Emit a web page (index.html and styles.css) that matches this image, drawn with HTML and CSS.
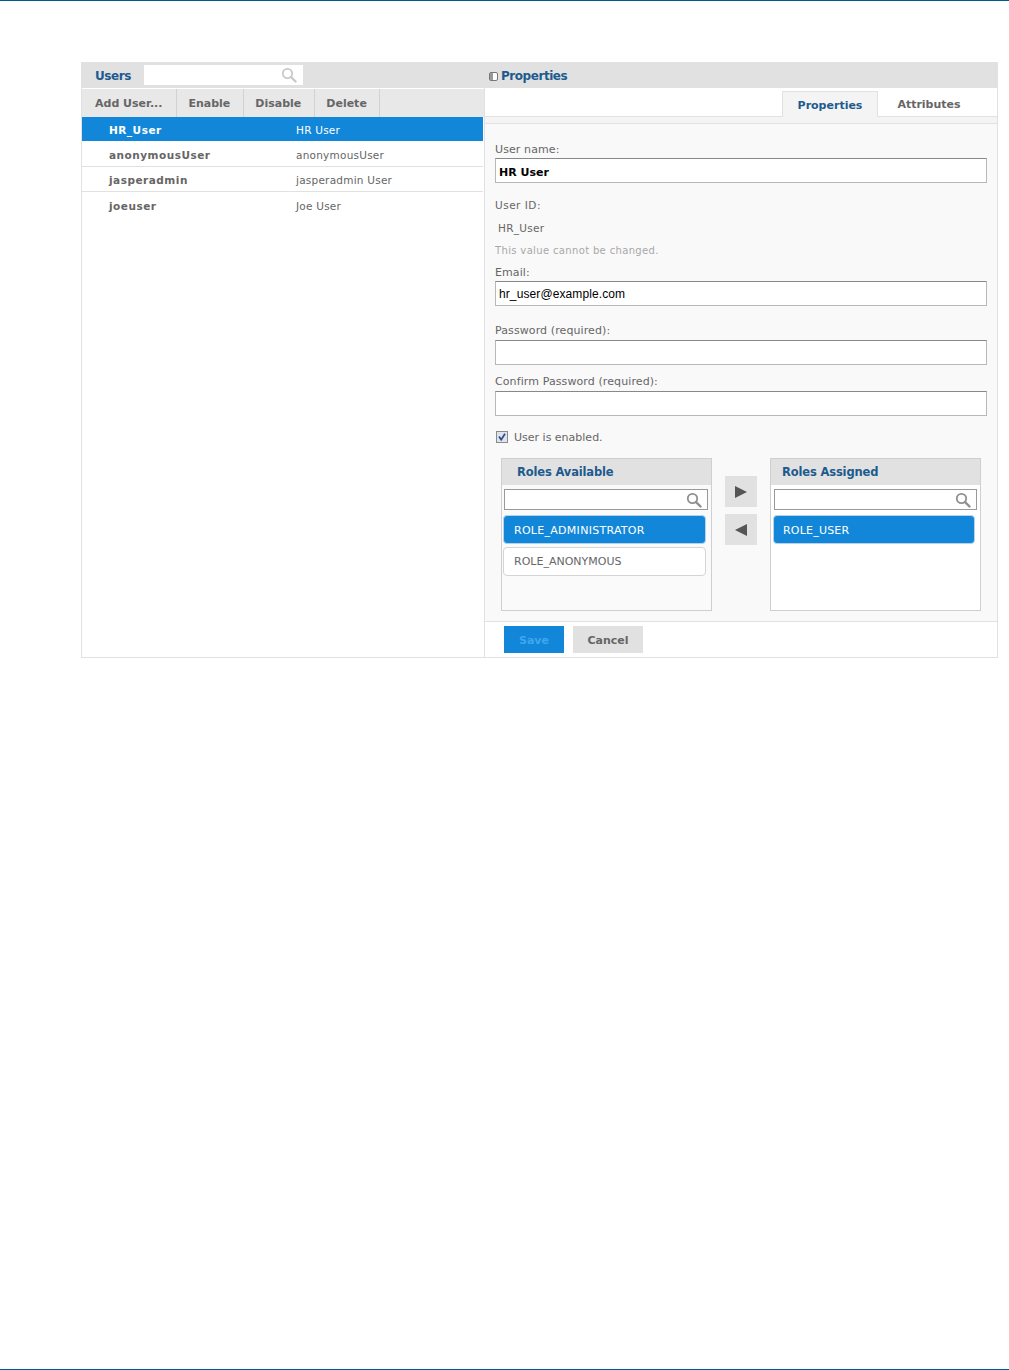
FILE: index.html
```html
<!DOCTYPE html>
<html lang="en">
<head>
<meta charset="utf-8">
<title>Users</title>
<link rel="stylesheet" href="styles.css">
</head>
<body>
<svg class="defs" width="0" height="0" aria-hidden="true"><symbol id="mag" viewBox="0 0 16 16"><circle cx="6.5" cy="6.5" r="4.7" fill="none" stroke="currentColor" stroke-width="1.8"/><path d="M10 10l4.5 4.5" stroke="currentColor" stroke-width="2.4" stroke-linecap="round"/></symbol></svg>
<div class="page">
  <main class="manager">
    <section class="users">
      <header class="head users-head">
        <h2 class="title">Users</h2>
        <div class="head-search"><svg class="mag mag-light"><use href="#mag"/></svg></div>
      </header>
      <nav class="toolbar">
        <span class="tool">Add User...</span>
        <span class="tool">Enable</span>
        <span class="tool">Disable</span>
        <span class="tool">Delete</span>
      </nav>
      <ul class="user-list">
        <li class="user selected"><b>HR_User</b><span>HR User</span></li>
        <li class="user"><b>anonymousUser</b><span>anonymousUser</span></li>
        <li class="user"><b>jasperadmin</b><span>jasperadmin User</span></li>
        <li class="user plain"><b>joeuser</b><span>Joe User</span></li>
      </ul>
    </section>
    <section class="props">
      <header class="head props-head">
        <svg class="panel-icon" viewBox="0 0 9 9"><rect x=".5" y=".5" width="8" height="8" rx="1.5" fill="#fff" stroke="#777"/><rect x="1" y="1" width="3" height="7" fill="#999"/></svg>
        <h2 class="title">Properties</h2>
      </header>
      <div class="tabs">
        <span class="tab active">Properties</span>
        <span class="tab">Attributes</span>
      </div>
      <div class="strip"></div>
      <form class="form">
        <label class="lab lab-name">User name:</label>
        <div class="field strong">HR User</div>
        <label class="lab lab-id">User ID:</label>
        <div class="idval">HR_User</div>
        <div class="hint">This value cannot be changed.</div>
        <label class="lab lab-email">Email:</label>
        <div class="field mail">hr_user@example.com</div>
        <label class="lab lab-pw">Password (required):</label>
        <div class="field"></div>
        <label class="lab lab-cpw">Confirm Password (required):</label>
        <div class="field"></div>
        <div class="enabled">
          <svg class="check" viewBox="0 0 12 12"><rect x=".5" y=".5" width="11" height="11" fill="#dfe3ea" stroke="#8a8a8a"/><path d="M3 5.5l2.2 3.2L9 2.8" fill="none" stroke="#2c4a8c" stroke-width="1.7"/></svg>
          <span>User is enabled.</span>
        </div>
        <div class="roles">
          <div class="role-box avail">
            <h3 class="role-title">Roles Available</h3>
            <div class="role-search"><svg class="mag"><use href="#mag"/></svg></div>
            <div class="role-item on wide">ROLE_ADMINISTRATOR</div>
            <div class="role-item">ROLE_ANONYMOUS</div>
          </div>
          <div class="moves">
            <span class="move"><svg viewBox="0 0 12 12" width="12" height="12"><path d="M0 0l12 6-12 6z" fill="#555"/></svg></span>
            <span class="move"><svg viewBox="0 0 12 12" width="12" height="12"><path d="M12 0L0 6l12 6z" fill="#555"/></svg></span>
          </div>
          <div class="role-box assigned">
            <h3 class="role-title tight">Roles Assigned</h3>
            <div class="role-search"><svg class="mag"><use href="#mag"/></svg></div>
            <div class="role-item on">ROLE_USER</div>
          </div>
        </div>
      </form>
      <footer class="actions">
        <span class="btn save">Save</span>
        <span class="btn cancel">Cancel</span>
      </footer>
    </section>
  </main>
</div>
</body>
</html>
```

FILE: styles.css
```css
* { box-sizing: border-box; }
html, body { margin: 0; padding: 0; background: #fff; }
body { font-family: "DejaVu Sans", Verdana, sans-serif; font-size: 11px; color: #666; }
.defs { position: absolute; }
.page { height: 1370px; border-top: 1px solid #005a8c; border-bottom: 1px solid #005a8c; padding: 61px 11px 0 81px; }
.manager { display: flex; height: 596px; border: 1px solid #e1e1e1; border-top: 0; }
.users { width: 403px; flex: none; border-right: 1px solid #e1e1e1; }
.props { flex: 1; display: flex; flex-direction: column; min-width: 0; }
.head { height: 26px; background: #e1e1e1; display: flex; align-items: center; padding-top: 1px; }
.users-head { padding-left: 13px; }
.title { margin: 0; font-size: 12px; letter-spacing: -.45px; font-weight: 700; color: #1d5b8e; }
.head-search { width: 159px; height: 20px; margin: -1px 0 0 13px; background: #fff; display: flex; justify-content: flex-end; align-items: center; padding-right: 6px; }
.mag { width: 16px; height: 16px; color: #8f8f8f; display: block; }
.mag-light { color: #c9c9c9; }
.toolbar { height: 28px; margin-top: 1px; background: #e8e8e8; display: flex; }
.tool { padding: 0 13px 0 11px; border-right: 1px solid #d2d2d2; line-height: 30px; font-weight: 700; color: #666; font-size: 11px; }
.tool:first-child { padding-left: 13px; padding-right: 14px; }
.tool:last-child { padding-right: 12px; }
.user-list { list-style: none; margin: 0 1px 0 0; padding: 0; }
.user { height: 25px; display: flex; align-items: center; padding: 2px 0 0 27px; border-bottom: 1px solid #e1e1e1; font-size: 10.5px; letter-spacing: .23px; color: #666; }
.user b { width: 187px; flex: none; letter-spacing: .5px; }
.selected { height: 24px; margin-bottom: 1px; background: #1287d9; color: #fff; border-bottom: 0; padding-top: 2px; }
.user.plain { border-bottom: 0; }
.props-head { padding-left: 4px; }
.panel-icon { width: 9px; height: 9px; margin-right: 3px; margin-top: 2px; }
.tabs { height: 29px; display: flex; justify-content: flex-end; padding: 3px 23px 0 0; border-bottom: 1px solid #e1e1e1; }
.tab { padding: 7px 0 0 2px; width: 92px; text-align: center; font-weight: 700; font-size: 11px; color: #666; }
.tab.active { width: 96px; margin-right: 4px; padding: 7px 0 0; height: 26px; background: #f4f4f4; border: 1px solid #e1e1e1; border-bottom: 0; color: #1d5b8e; }
.strip { height: 7px; background: #f4f4f4; border-bottom: 1px solid #e1e1e1; }
.form { flex: 1; background: #f9f9f9; padding: 0 10px 0 10px; border-bottom: 1px solid #e1e1e1; min-height: 0; }
.lab { display: block; font-size: 11px; line-height: 14px; color: #666; letter-spacing: .1px; }
.lab-name { padding-top: 19px; height: 34px; }
.lab-id { margin-top: 15px; font-size: 10.5px; height: 14px; letter-spacing: .5px; }
.lab-email { margin-top: 10px; height: 15px; }
.lab-pw { margin-top: 18px; height: 16px; }
.lab-cpw { margin-top: 10px; height: 16px; }
.field { height: 25px; background: #fff; border: 1px solid #b8b8b8; border-top-color: #888; padding: 0 3px; line-height: 26px; color: #000; font-size: 11px; }
.strong { font-weight: 700; line-height: 27px; }
.mail { font-family: "Liberation Sans", Arial, sans-serif; font-size: 12px; letter-spacing: .1px; line-height: 24px; }
.idval { margin-top: 9px; padding-left: 3px; font-size: 10.5px; line-height: 14px; color: #666; letter-spacing: .3px; }
.hint { margin-top: 10px; height: 11px; overflow: hidden; font-size: 10px; line-height: 12px; color: #a8a8a8; letter-spacing: .35px; }
.enabled { display: flex; align-items: center; margin-top: 14px; height: 14px; }
.check { width: 12px; height: 12px; margin: 0 6px 0 1px; }
.roles { display: flex; margin: 14px 6px 0 6px; height: 153px; align-items: flex-start; }
.role-box { width: 211px; height: 153px; border: 1px solid #cfcfcf; flex: none; }
.avail { background: #fafafa; }
.assigned { background: #fff; }
.role-title { margin: 0; height: 26px; line-height: 27px; background: #e1e1e1; padding-left: 15px; font-size: 11.5px; letter-spacing: -.15px; font-weight: 700; color: #1d5b8e; }
.tight { padding-left: 11px; }
.role-search { height: 21px; margin: 4px 3px 0 2px; background: #fff; border: 1px solid #999; display: flex; justify-content: flex-end; align-items: center; padding-right: 5px; }
.assigned .role-search { margin-left: 3px; margin-right: 3px; }
.role-item { height: 29px; margin: 5px 5px 0 1px; padding-left: 10px; line-height: 27px; border: 1px solid #d4d4d4; border-radius: 4px; background: #fff; font-size: 11px; color: #666; }
.role-item + .role-item { margin-top: 3px; }
.role-item.on { background: #1287d9; border-color: #b6d3ea; color: #fff; line-height: 29px; }
.wide { letter-spacing: .28px; }
.assigned .role-item { margin-left: 2px; padding-left: 9px; letter-spacing: .2px; }
.moves { flex: 1; display: flex; flex-direction: column; align-items: center; padding-top: 18px; gap: 7px; }
.move { width: 32px; height: 31px; background: #e1e1e1; display: flex; align-items: center; justify-content: center; }
.actions { height: 35px; display: flex; align-items: flex-start; padding: 4px 0 0 19px; gap: 9px; }
.btn { height: 27px; line-height: 29px; text-align: center; font-weight: 700; font-size: 11px; }
.save { width: 60px; background: #1287d9; color: #3ea6ee; }
.cancel { width: 70px; background: #e1e1e1; color: #666; }
```
